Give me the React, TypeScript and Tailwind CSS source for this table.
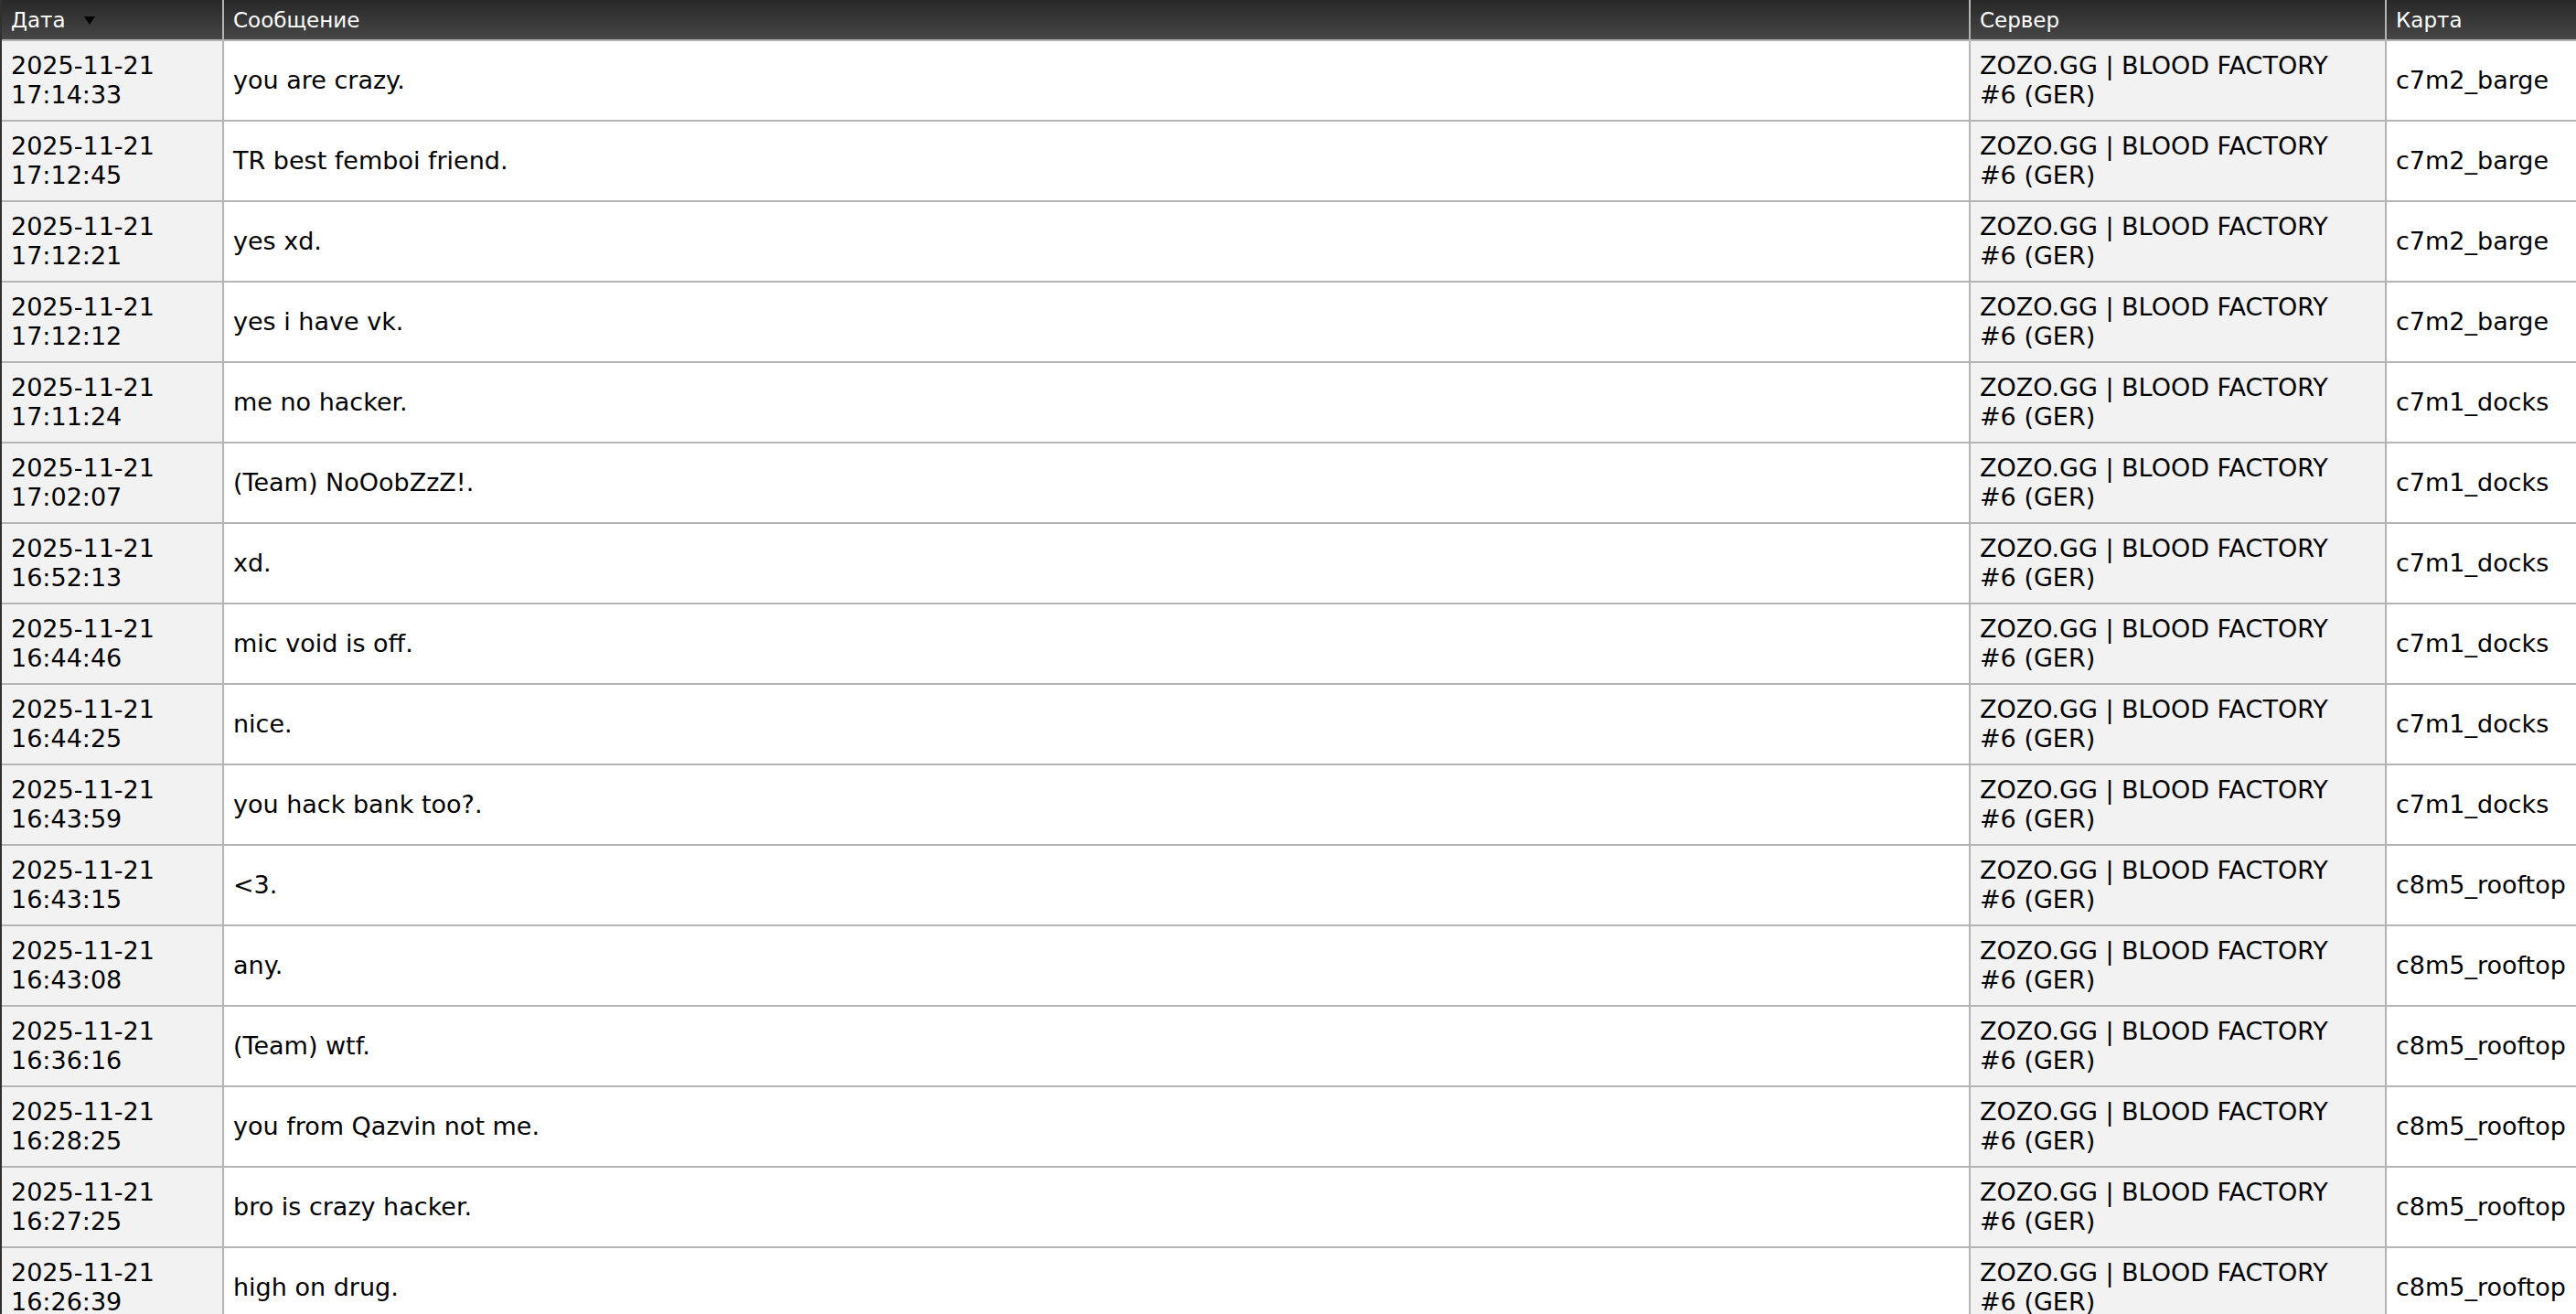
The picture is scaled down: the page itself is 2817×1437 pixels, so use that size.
import React from "react";

const rows: [string, string, string][] = [
  ["17:14:33", "you are crazy.", "c7m2_barge"],
  ["17:12:45", "TR best femboi friend.", "c7m2_barge"],
  ["17:12:21", "yes xd.", "c7m2_barge"],
  ["17:12:12", "yes i have vk.", "c7m2_barge"],
  ["17:11:24", "me no hacker.", "c7m1_docks"],
  ["17:02:07", "(Team) NoOobZzZ!.", "c7m1_docks"],
  ["16:52:13", "xd.", "c7m1_docks"],
  ["16:44:46", "mic void is off.", "c7m1_docks"],
  ["16:44:25", "nice.", "c7m1_docks"],
  ["16:43:59", "you hack bank too?.", "c7m1_docks"],
  ["16:43:15", "<3.", "c8m5_rooftop"],
  ["16:43:08", "any.", "c8m5_rooftop"],
  ["16:36:16", "(Team) wtf.", "c8m5_rooftop"],
  ["16:28:25", "you from Qazvin not me.", "c8m5_rooftop"],
  ["16:27:25", "bro is crazy hacker.", "c8m5_rooftop"],
  ["16:26:39", "high on drug.", "c8m5_rooftop"],
];

const headCls =
  "h-[43px] flex items-center px-[10px] bg-gradient-to-b from-[#282828] to-[#474747] text-white text-[23px] leading-[26px]";
const cellCls =
  "h-[86px] flex items-center px-[10px] text-black text-[27px] leading-[32px] whitespace-nowrap overflow-hidden";

export default function App() {
  return (
    <div className="w-[2817px] h-[1437px] overflow-hidden bg-white font-['Verdana','DejaVu_Sans',sans-serif]">
      <div className="grid grid-cols-[241px_1908px_453px_1fr] gap-[2px] bg-[#b4b4b4] border-l-2 border-[#303030]">
        <div className={headCls}>
          <span>Дата</span>
          <svg className="ml-[20px] mt-[2px]" width="12" height="9" viewBox="0 0 12 9">
            <polygon points="0,0 12,0 6,9" fill="#000" />
          </svg>
        </div>
        <div className={headCls}>Сообщение</div>
        <div className={headCls}>Сервер</div>
        <div className={headCls}>Карта</div>
        {rows.map(([time, msg, map], i) => (
          <React.Fragment key={i}>
            <div className={cellCls + " bg-[#f2f2f2]"}>
              <div>
                2025-11-21
                <br />
                {time}
              </div>
            </div>
            <div className={cellCls + " bg-white"}>{msg}</div>
            <div className={cellCls + " bg-[#f2f2f2]"}>
              <div>
                ZOZO.GG | BLOOD FACTORY
                <br />
                #6 (GER)
              </div>
            </div>
            <div className={cellCls + " bg-white"}>{map}</div>
          </React.Fragment>
        ))}
      </div>
    </div>
  );
}
